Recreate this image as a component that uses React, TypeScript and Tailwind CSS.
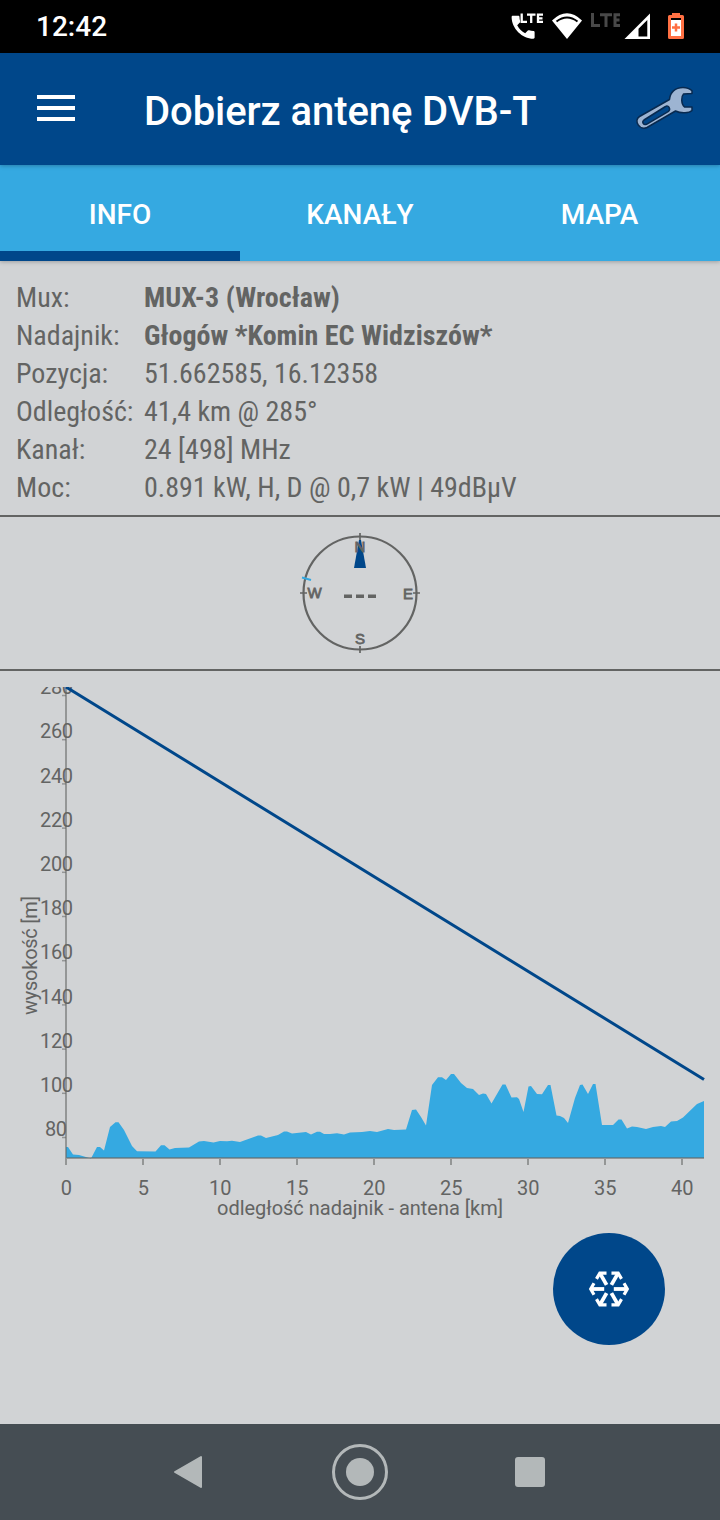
import React from 'react';

const ROWS = [
  { label: 'Mux:', value: 'MUX-3 (Wrocław)', bold: true },
  { label: 'Nadajnik:', value: 'Głogów *Komin EC Widziszów*', bold: true },
  { label: 'Pozycja:', value: '51.662585, 16.12358', bold: false },
  { label: 'Odległość:', value: '41,4 km @ 285°', bold: false },
  { label: 'Kanał:', value: '24 [498] MHz', bold: false },
  { label: 'Moc:', value: '0.891 kW, H, D @ 0,7 kW | 49dBµV', bold: false },
];

const TERRAIN =
  '66,1147 68,1147 73,1154.5 79,1155 91,1158.5 97,1147 100,1147 104,1150.5 110,1127 115.5,1122.3 118.5,1122.3 124,1130 132,1146 137,1151.3 155.5,1151.5 161,1145.3 164.5,1145.3 169.5,1149.5 175,1148 189,1147.5 199,1141.5 204,1141 213.5,1142.5 220,1141 227,1141.3 232,1140.8 240,1142 258,1135.5 261,1135.5 266,1138 278,1135 284,1131.5 287,1131.5 292,1133.5 306,1132 311,1134.5 317,1131.7 320,1131.7 324,1134 330,1134 337,1133.3 344,1134.5 350,1132.5 362,1132 370,1131 377,1132 388,1129 394,1130 406,1129.5 412,1110 416,1109.5 421,1117 426,1125.5 432,1085 438,1077.3 442,1077.3 446,1080 451,1074 454,1074 461,1083 467,1088 473,1089 479,1095 483,1093.5 486,1094 491.5,1103.5 502.5,1084.5 505.5,1084.5 511.5,1097.5 517,1097.3 519,1099 523.5,1112 528.5,1086.5 531,1086 537,1094 542,1094.3 548,1085 550.5,1085 556.5,1115.5 560,1116 564,1118 568,1123 575,1098 580,1085 582.5,1084.5 588,1094 593,1084 595.5,1084 602,1125 613,1125 618.5,1119.5 621.5,1119.5 627,1128.5 632,1126.5 637,1127 646,1129 653,1127 661,1126 665,1127 671,1121.5 677,1121 683,1117.5 697,1104 704,1101 704,1158 66,1158';

function StatusIcons() {
  return (
    <svg className="block" width="220" height="53" viewBox="500 0 220 53">
      <path
        transform="translate(509.200 12.200) scale(1.21)"
        fill="#fff"
        d="M20 15.500c-1.250 0-2.450-.2-3.570-.57a1.020 1.020 0 0 0-1.020.24l-2.200 2.200a15.045 15.045 0 0 1-6.590-6.590l2.200-2.210a.96.96 0 0 0 .25-1A11.360 11.360 0 0 1 8.500 4c0-.55-.45-1-1-1H3c-.55 0-1 .45-1 1 0 9.390 8.610 18 18 18 .55 0 1-.45 1-1v-4.500c0-.55-.45-1-1-1z"
      />
      <path fill="none" stroke="#fff" strokeWidth="2.300" d="M521.700 13.500V21.900H527M527 14.700H535.500M531.200 14.700V23M543 14.700H538V21.900H543M538 18.300H542.500" />
      <path fill="#fff" d="M552 20.500Q567 6 582 20.500L567 39Z" />
      <path fill="none" stroke="#000" strokeWidth="2" d="M556.500 21.500Q567 13.500 577.500 21.500" />
      <path fill="none" stroke="#484848" strokeWidth="3" d="M592.500 13V25.500H600M600 14.700H612M606 14.700V27M620 14.700H615V25.500H620M615 20H619.500" />
      <path fill="#fff" fillRule="evenodd" d="M650 13.500V39H624.500ZM647.300 20L638.500 28.800V36.500H647.300Z" />
      <path fill="#ff7043" d="M672 13h8v2h2.500q1.500 0 1.500 1.500v21q0 1.500-1.500 1.500h-13q-1.500 0-1.500-1.500v-21q0-1.500 1.500-1.500h2.500Z" />
      <path fill="#fff" d="M671 20h10v16h-10Z" />
      <path fill="#000" d="M671 18h10v2h-10Z" />
      <path stroke="#ff7043" strokeWidth="2.500" d="M672 27.500h8M676 23.500v8" />
    </svg>
  );
}

function Wrench() {
  return (
    <svg className="block" width="64" height="52" viewBox="632 84 64 52">
      <path
        fill="#9db4d2"
        stroke="#082a50"
        strokeWidth="1.500"
        strokeLinejoin="round"
        fillRule="evenodd"
        d="M639.500 117.500L669.500 100.500C670 93.500 675 88.500 683 88.500C687 88.500 690 89.800 692 91.800V94.500L683.500 95C681 97.500 681 105 684.500 108L692 108V111.500C689.500 114 681.500 115 675.500 112L647 128.500C640 132 633 121.500 639.500 117.500ZM644 121C641.500 123 643.500 126.500 646.500 125.300L668.500 112.300C671 110.500 668.500 105.500 665.500 107.500Z"
      />
    </svg>
  );
}

function Compass() {
  return (
    <svg className="block" width="160" height="152" viewBox="280 517 160 152">
      <path fill="#00478a" d="M359 540h2l5 28h-12Z" />
      <g stroke="#636463" fill="none" strokeWidth="2.200">
        <circle cx="360" cy="593" r="56.500" />
        <path d="M360 533v7M360 646v7M300 593h7M413 593h7" strokeWidth="1.700" />
        <path d="M344 596.300h8M356 596.300h8M368 596.300h8" strokeWidth="3.600" />
      </g>
      <path d="M302 577.500l9 2.500" stroke="#35a9e1" strokeWidth="2" />
      <g className="fill-[#636463] font-['Liberation_Sans'] text-[15px]" stroke="#636463" strokeWidth=".8" textAnchor="middle">
        <text x="360" y="552">N</text>
        <text x="360" y="644">S</text>
        <text x="314.500" y="598">W</text>
        <text x="408" y="598.500">E</text>
      </g>
    </svg>
  );
}

function Chart() {
  return (
    <svg className="block" width="720" height="537" viewBox="0 687 720 537">
      <polygon points={TERRAIN} fill="#35a9e1" />
      <g className="fill-[#636463] font-['Roboto'] text-[20px]">
        {Array.from({ length: 11 }, (_, i) => (
          <text key={i} x={i === 10 ? 67 : 73} y={694.200 + i * 44.200} textAnchor="end" textLength={i < 10 ? 33 : 22}>{280 - i * 20}</text>
        ))}
        {Array.from({ length: 9 }, (_, i) => (
          <text key={i} x={66.300 + i * 77} y="1195" textAnchor="middle">{i * 5}</text>
        ))}
        <text x="360" y="1215" textAnchor="middle" textLength="286">odległość nadajnik - antena [km]</text>
        <text transform="translate(36.500 955.500) rotate(-90)" textAnchor="middle" textLength="119">wysokość [m]</text>
      </g>
      <g stroke="#636463" strokeOpacity=".55" strokeWidth="2">
        <path d="M66 687V1158M65 1158H704" />
        {Array.from({ length: 11 }, (_, i) => (
          <path key={i} d={`M62 ${695.500 + i * 44.200}h4`} strokeWidth="1.500" />
        ))}
        {Array.from({ length: 9 }, (_, i) => (
          <path key={i} d={`M${66 + i * 77} 1159v6`} />
        ))}
      </g>
      <path d="M66 687L704 1079.500" stroke="#00478a" strokeWidth="3" />
    </svg>
  );
}

function Snowflake() {
  return (
    <svg className="block" width="48" height="48" viewBox="-24 -24 48 48">
      <g fill="none" stroke="#fff" strokeWidth="3.800">
        {[0, 60, 120, 180, 240, 300].map((angle) => (
          <g key={angle} transform={`rotate(${angle})`}>
            <path d="M4.800 0H18" />
            <path d="M15 -5.800L18.300 0L15 5.800" strokeWidth="3.200" />
          </g>
        ))}
      </g>
    </svg>
  );
}

export default function App() {
  return (
    <div className="flex h-[1520px] w-[720px] flex-col overflow-hidden bg-[#d1d3d5] font-['Roboto',sans-serif] text-[#636463]">
      <div className="flex h-[53px] shrink-0 items-center justify-between bg-black pl-9 text-white">
        <span className="pt-px text-[28px] font-medium leading-[54px]">12:42</span>
        <StatusIcons />
      </div>
      <header className="z-10 flex h-28 shrink-0 items-center bg-[#00478a] pl-[37px] pr-6 text-white shadow-[0_1px_4px_rgba(0,0,0,0.25)]">
        <button className="mb-[3px] flex w-[38px] flex-col gap-[7px]">
          <span className="h-1 w-full bg-white" />
          <span className="h-1 w-full bg-white" />
          <span className="h-1 w-full bg-white" />
        </button>
        <h1 className="ml-[69px] grow pt-1.5 text-[40px] font-medium leading-[48px] tracking-[-0.08px]">Dobierz antenę DVB-T</h1>
        <Wrench />
      </header>
      <nav className="z-[5] grid h-24 shrink-0 grid-cols-3 bg-[#35a9e1] text-center text-[28px] font-medium leading-[100px] text-white shadow-[0_1px_4px_rgba(0,0,0,0.25)]">
        <div className="h-24 border-b-10 border-[#00478a]">INFO</div>
        <div>KANAŁY</div>
        <div className="pr-px">MAPA</div>
      </nav>
      <section className="h-[256px] shrink-0 border-b-2 border-[#636463] pl-4 pt-[18px] font-['Roboto_Condensed','Roboto',sans-serif] text-[28px] leading-[38px] [font-stretch:75%]">
        {ROWS.map((row) => (
          <div key={row.label} className="flex h-[38px] whitespace-nowrap">
            <span className="w-32">{row.label}</span>
            <span className={row.bold ? 'font-bold tracking-[0.03px]' : 'font-normal'}>{row.value}</span>
          </div>
        ))}
      </section>
      <section className="flex h-[154px] shrink-0 justify-center border-b-2 border-[#636463]">
        <Compass />
      </section>
      <section className="shrink-0 pt-4">
        <Chart />
      </section>
      <div className="flex grow justify-end pr-[55px] pt-[9px]">
        <button className="flex size-28 items-center justify-center rounded-full bg-[#00478a]">
          <Snowflake />
        </button>
      </div>
      <footer className="flex h-24 shrink-0 bg-[#454d53]">
        <svg className="block" width="720" height="96" viewBox="0 1424 720 96" fill="#b3b8b9">
          <path d="M175 1472L201 1457V1487Z" stroke="#b3b8b9" strokeWidth="2" strokeLinejoin="round" />
          <circle cx="360" cy="1472" r="14" />
          <circle cx="360" cy="1472" r="26.500" fill="none" stroke="#b3b8b9" strokeWidth="3" />
          <rect x="515" y="1457" width="30" height="30" rx="3" />
        </svg>
      </footer>
    </div>
  );
}
